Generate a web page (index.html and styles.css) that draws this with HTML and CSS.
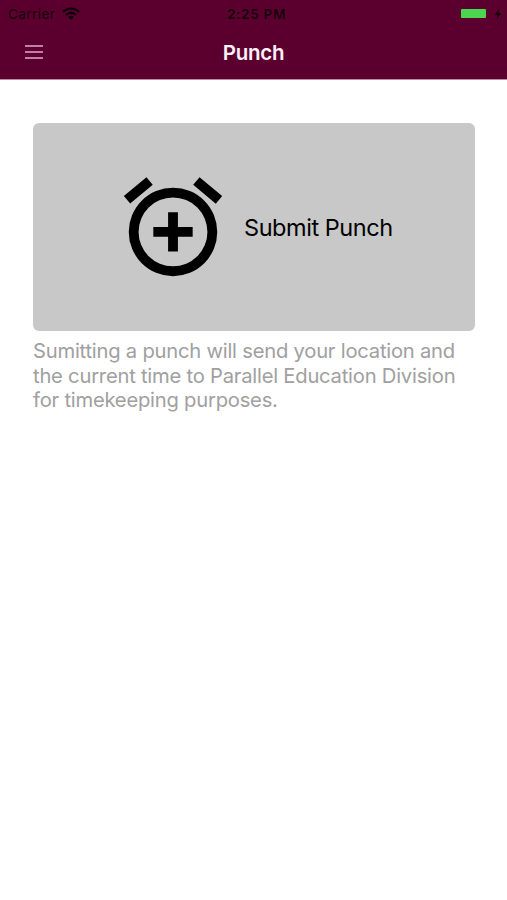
FILE: index.html
```html
<!DOCTYPE html>
<html lang="en">
<head>
<meta charset="utf-8">
<title>Punch</title>
<link rel="stylesheet" href="styles.css">
</head>
<body>
<header class="header">
  <div class="status">
    <div class="status-left">
      <span class="carrier">Carrier</span>
      <svg class="wifi" viewBox="0 0 18 13" width="18" height="13"><g fill="none" stroke="#10000a" stroke-width="2.3"><path d="M1 4.8Q9-2 17 4.8"/><path d="M4 8Q9 3.6 14 8"/></g><path d="M6 9.9Q9 7.4 12 9.9L9 12.8z" fill="#10000a"/></svg>
    </div>
    <time class="clock">2:25 PM</time>
    <div class="status-right">
      <span class="battery"></span>
      <svg class="bolt" viewBox="0 0 8 12" width="8" height="12"><path d="M5 1L.8 6.8h2.7L2.8 11 7.2 5H4.4z" fill="#10000a"/></svg>
    </div>
  </div>
  <nav class="nav">
    <button class="menu" aria-label="Menu"><span></span><span></span><span></span></button>
    <h1 class="title">Punch</h1>
  </nav>
</header>
<main class="content">
  <button class="punch">
    <svg class="alarm" viewBox="0 0 24 24" width="118" height="118"><path d="M7.88 3.39L6.6 1.86 2 5.71l1.29 1.53zM22 5.72l-4.6-3.86-1.29 1.53 4.6 3.86zM12 4a9 9 0 1 0 0 18 9 9 0 0 0 0-18zm0 16a7 7 0 1 1 0-14 7 7 0 0 1 0 14zm1-11h-2v3H8v2h3v3h2v-3h3v-2h-3z"/></svg>
    <span class="label">Submit Punch</span>
  </button>
  <p class="note">Sumitting a punch will send your location and<br>the current time to Parallel Education Division<br>for timekeeping purposes.</p>
</main>
</body>
</html>
```
FILE: styles.css
```css
* { box-sizing: border-box; }
body {
  margin: 0;
  min-height: 900px;
  background: #fff;
  font-family: Inter, "Liberation Sans", sans-serif;
}
button { border: 0; padding: 0; font: inherit; }
.header {
  height: 80px;
  background: #5b002e;
  border-bottom: 1px solid #b98aa2;
}
.status {
  display: grid;
  grid-template-columns: 1fr auto 1fr;
  align-items: center;
  height: 27px;
  padding: 0 5px 0 8px;
  color: #16000b;
}
.status-left, .status-right { display: flex; align-items: center; }
.status-left { gap: 7px; }
.status-right { justify-content: flex-end; gap: 8px; }
.battery { width: 25px; height: 9px; border-radius: 1px; background: #4bd550; }
.carrier { font-size: 13.5px; letter-spacing: 0.45px; }
.clock { padding-left: 3px; font-size: 13.5px; font-weight: 600; letter-spacing: 0.7px; }
.nav {
  display: grid;
  grid-template-columns: 60px 1fr 60px;
  align-items: center;
  height: 50px;
}
.menu {
  display: flex;
  flex-direction: column;
  gap: 4px;
  width: 18px;
  margin-left: 25px;
  background: none;
}
.menu span { height: 2px; background: #c27fa3; }
.title {
  margin: 0;
  padding-top: 1px;
  color: #fff0fa;
  font-size: 20.5px;
  font-weight: 600;
  letter-spacing: -0.3px;
  text-align: center;
}
.content { padding: 43px 32px 0 33px; }
.punch {
  display: flex;
  align-items: center;
  width: 100%;
  height: 207.5px;
  padding-left: 81px;
  border-radius: 6px;
  background: #c8c8c8;
  color: #000;
}
.label {
  margin-left: 12px;
  padding-top: 1px;
  font-size: 23.5px;
  letter-spacing: -0.45px;
  white-space: nowrap;
}
.note {
  margin: 8.5px 0 0;
  color: #a0a0a0;
  font-size: 20.2px;
  line-height: 24.6px;
  letter-spacing: -0.22px;
  white-space: nowrap;
}
```
